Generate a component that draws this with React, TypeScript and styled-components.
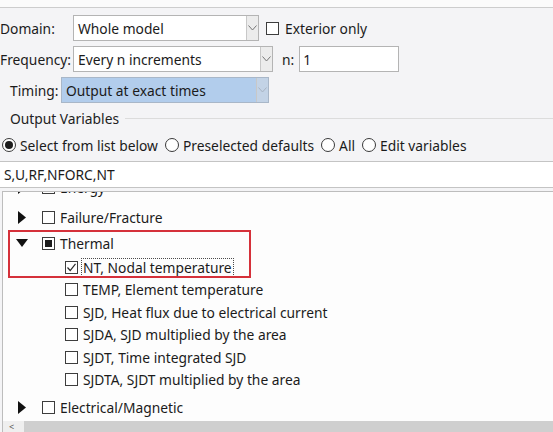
import React from 'react';
import styled, { createGlobalStyle } from 'styled-components';

const Global = createGlobalStyle`
  html, body { margin: 0; padding: 0; }
  body {
    width: 553px; height: 432px; overflow: hidden;
    background: #f4f4f6;
    font-family: "Noto Sans", "Open Sans", sans-serif;
    font-size: 13.8px;
    color: #1b1b1b;
  }
`;

const Page = styled.div`
  width: 553px; height: 432px;
  display: flex; flex-direction: column;
  overflow: hidden;
`;

const TopStrip = styled.div`
  flex: none; height: 7px;
  background: #fbfbfb;
  border-bottom: 1px solid #cdcdcd;
`;

const Form = styled.div`
  display: flex; flex-direction: column; gap: 5px;
  padding-top: 7px;
`;

const Row = styled.div`
  display: flex; align-items: center; height: 26px;
`;

const Label = styled.span<{ $w: number; $pl?: number }>`
  width: ${p => p.$w}px;
  padding-left: ${p => p.$pl ?? 0}px;
  box-sizing: border-box;
  white-space: nowrap;
  flex: none;
`;

const Combo = styled.div<{ $w: number; $sel?: boolean }>`
  width: ${p => p.$w}px; height: 26px; box-sizing: border-box;
  border: 1px solid ${p => (p.$sel ? '#a9b7c8' : '#b4b4b4')};
  background: ${p => (p.$sel ? '#b2cdec' : '#ffffff')};
  display: flex; align-items: center; flex: none;
`;

const ComboText = styled.span`
  flex: 1; padding-left: 4px; white-space: nowrap; overflow: hidden;
`;

const ArrowBtn = styled.div<{ $dim?: boolean }>`
  width: 12px; height: 24px; box-sizing: border-box;
  background: ${p => (p.$dim ? '#c3d3e6' : '#ececec')};
  border-left: 1px solid #c8c8c8;
  display: flex; align-items: center; justify-content: center;
`;

const Chevron = ({ color }: { color: string }) => (
  <svg width="9" height="6" viewBox="0 0 9 6">
    <polyline points="0.5,0.5 4.5,5 8.5,0.5" fill="none" stroke={color} strokeWidth="1" />
  </svg>
);

const Box = styled.span<{ $ml?: number }>`
  width: 13px; height: 13px; box-sizing: border-box;
  border: 1px solid #3d3d3d; background: #fff;
  margin-left: ${p => p.$ml ?? 0}px;
  display: inline-flex; align-items: center; justify-content: center;
  flex: none;
`;

const PartialFill = styled.span`
  width: 7px; height: 7px; background: #1d1d1d;
`;

const TextInput = styled.div<{ $w: number; $ml: number }>`
  width: ${p => p.$w}px; height: 26px; box-sizing: border-box;
  margin-left: ${p => p.$ml}px;
  border: 1px solid #b4b4b4; background: #fff;
  display: flex; align-items: center; padding-left: 3px;
`;

const Plain = styled.span<{ $ml?: number }>`
  margin-left: ${p => p.$ml ?? 0}px; white-space: nowrap;
`;

const GroupHead = styled.div`
  display: flex; align-items: center; height: 18px; margin-top: 6px;
`;

const GroupTitle = styled.span`
  padding-left: 10px; white-space: nowrap; color: #222;
`;

const GroupLine = styled.div`
  flex: 1; margin-left: 6px; border-top: 1px solid #dcdcdc;
`;

const RadioRow = styled.div`
  display: flex; align-items: center; height: 18px;
  margin-top: 9px; padding-left: 2px; gap: 7px;
`;

const RadioItem = styled.span`
  display: inline-flex; align-items: center; gap: 4px; white-space: nowrap;
`;

const RadioCircle = styled.span<{ $on?: boolean }>`
  width: 14px; height: 14px; box-sizing: border-box; border-radius: 50%;
  border: 1px solid #3a3a3a; background: #fff;
  display: inline-flex; align-items: center; justify-content: center;
  &::after {
    content: '';
    width: 8px; height: 8px; border-radius: 50%;
    background: ${p => (p.$on ? '#1d1d1d' : 'transparent')};
  }
`;

const VarField = styled.div`
  margin-top: 7px; height: 27px; box-sizing: border-box;
  background: #fff;
  border-top: 1px solid #c4c4c4; border-bottom: 1px solid #c4c4c4;
  display: flex; align-items: center; padding-left: 4px;
  flex: none;
`;

const TreeBox = styled.div`
  margin-top: 3px; margin-left: 2px;
  flex: 1; min-height: 0;
  background: #fdfdfd;
  border-top: 1px solid #bdbdbd; border-left: 1px solid #bdbdbd;
  display: flex; flex-direction: column;
`;

const TreeBody = styled.div`
  flex: 1; min-height: 0; overflow: hidden; position: relative;
`;

const TreeList = styled.div`
  margin-top: -18px; display: flex; flex-direction: column;
`;

const TopRow = styled.div<{ $mt?: number }>`
  height: 26px; display: flex; align-items: center;
  padding-left: 10px; margin-top: ${p => p.$mt ?? 0}px;
`;

const Twisty = styled.span`
  width: 18px; height: 26px; display: inline-flex;
  align-items: center; justify-content: center; flex: none;
`;

const ChildRow = styled.div`
  height: 22.5px; display: flex; align-items: center; padding-left: 62px;
`;

const ItemText = styled.span<{ $focus?: boolean }>`
  white-space: nowrap;
  margin-left: ${p => (p.$focus ? 3 : 5)}px;
  padding: 0 ${p => (p.$focus ? 1 : 0)}px;
  border: ${p => (p.$focus ? '1px dotted #4a4a4a' : 'none')};
  line-height: 17px;
`;

const Highlight = styled.div`
  position: absolute; left: 5px; top: 38px;
  width: 243px; height: 48px; box-sizing: border-box;
  border: 2px solid #d5313a;
  pointer-events: none;
`;

const HScroll = styled.div`
  flex: none; height: 11px; display: flex; background: #cfcfcf;
`;

const ScrollArrow = styled.div`
  width: 21px; background: #efefef; color: #555;
  font-size: 9px; line-height: 11px; padding-left: 6px; box-sizing: border-box;
`;

const TriRight = () => (
  <svg width="8" height="13" viewBox="0 0 8 13"><polygon points="0,0 8,6.5 0,13" fill="#111" /></svg>
);
const TriDown = () => (
  <svg width="12" height="8" viewBox="0 0 12 8"><polygon points="0,0 12,0 6,8" fill="#111" /></svg>
);

const Check = () => (
  <svg width="11" height="11" viewBox="0 0 11 11">
    <polyline points="1.5,5.5 4.2,8.5 9.5,1.8" fill="none" stroke="#2a2a2a" strokeWidth="1.2" />
  </svg>
);

const children = [
  'NT, Nodal temperature',
  'TEMP, Element temperature',
  'SJD, Heat flux due to electrical current',
  'SJDA, SJD multiplied by the area',
  'SJDT, Time integrated SJD',
  'SJDTA, SJDT multiplied by the area',
];

export default function App() {
  return (
    <Page>
      <Global />
      <TopStrip />
      <Form>
        <Row>
          <Label $w={73}>Domain:</Label>
          <Combo $w={186}>
            <ComboText>Whole model</ComboText>
            <ArrowBtn><Chevron color="#777" /></ArrowBtn>
          </Combo>
          <Box $ml={7} />
          <Plain $ml={6}>Exterior only</Plain>
        </Row>
        <Row>
          <Label $w={73} $pl={0}>Frequency:</Label>
          <Combo $w={200}>
            <ComboText>Every n increments</ComboText>
            <ArrowBtn><Chevron color="#777" /></ArrowBtn>
          </Combo>
          <Plain $ml={9}>n:</Plain>
          <TextInput $w={100} $ml={5}>1</TextInput>
        </Row>
        <Row>
          <Label $w={61} $pl={10}>Timing:</Label>
          <Combo $w={208} $sel>
            <ComboText>Output at exact times</ComboText>
            <ArrowBtn $dim><Chevron color="#a8b4c2" /></ArrowBtn>
          </Combo>
        </Row>
      </Form>
      <GroupHead>
        <GroupTitle>Output Variables</GroupTitle>
        <GroupLine />
      </GroupHead>
      <RadioRow>
        <RadioItem><RadioCircle $on />Select from list below</RadioItem>
        <RadioItem><RadioCircle />Preselected defaults</RadioItem>
        <RadioItem><RadioCircle />All</RadioItem>
        <RadioItem><RadioCircle />Edit variables</RadioItem>
      </RadioRow>
      <VarField>S,U,RF,NFORC,NT</VarField>
      <TreeBox>
        <TreeBody>
          <TreeList>
            <TopRow>
              <Twisty><TriRight /></Twisty>
              <Box $ml={11} />
              <ItemText>Energy</ItemText>
            </TopRow>
            <TopRow $mt={4}>
              <Twisty><TriRight /></Twisty>
              <Box $ml={11} />
              <ItemText>Failure/Fracture</ItemText>
            </TopRow>
            <TopRow>
              <Twisty><TriDown /></Twisty>
              <Box $ml={11}><PartialFill /></Box>
              <ItemText>Thermal</ItemText>
            </TopRow>
            {children.map((c, i) => (
              <ChildRow key={c}>
                <Box>{i === 0 ? <Check /> : null}</Box>
                <ItemText $focus={i === 0}>{c}</ItemText>
              </ChildRow>
            ))}
            <TopRow $mt={3}>
              <Twisty><TriRight /></Twisty>
              <Box $ml={11} />
              <ItemText>Electrical/Magnetic</ItemText>
            </TopRow>
          </TreeList>
          <Highlight />
        </TreeBody>
        <HScroll>
          <ScrollArrow>&lt;</ScrollArrow>
        </HScroll>
      </TreeBox>
    </Page>
  );
}
